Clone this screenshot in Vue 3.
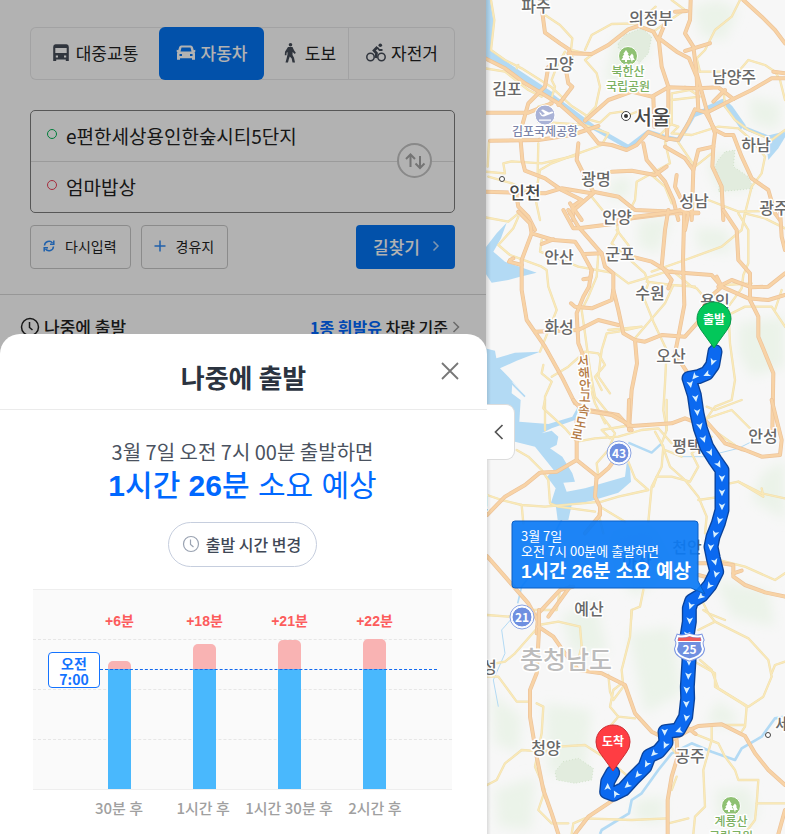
<script setup>
import { ref } from 'vue'

const modes = [
  { id: 'bus', label: '대중교통' },
  { id: 'car', label: '자동차' },
  { id: 'walk', label: '도보' },
  { id: 'bike', label: '자전거' },
]
const mode = ref('car')
const start = ref('e편한세상용인한숲시티5단지')
const goal = ref('엄마밥상')

const bars = [
  { extra: 6, label: '30분 후', height: 8 },
  { extra: 18, label: '1시간 후', height: 25 },
  { extra: 21, label: '1시간 30분 후', height: 29 },
  { extra: 22, label: '2시간 후', height: 30 },
]

/* Map tiles: every tile holds its own roads, shifted down by dy */
const tiles = [
  {
    dy: 0,
    minor: [
      'M18 0L28 60L18 150L60 180L110 205L200 262L260 318L310 350',
      'M172 40L225 75L262 115L258 150L320 165L300 180L335 220L345 260L332 320L300 355L345 368L375 340L410 335L430 345L470 330',
      'M300 150L320 105L380 72L460 70L490 40L512 20',
      'M560 0L600 30L540 70L505 95',
      'M765 0L740 50L690 90L660 150L635 175L645 215',
      'M645 215L760 215L790 180L840 195L870 215L885 240L900 300',
      'M240 155L215 200L200 240L210 260L195 310L160 320',
      'M0 205L60 215L130 270L170 290',
      'M640 265L560 280L560 370L520 410',
      'M600 260L645 290L560 300',
      'M716 275L720 320L750 360L790 390L860 420L900 390',
      'M550 370L580 380L560 400L620 405L700 380L760 385L800 420L840 470L830 520L800 560L775 660',
      'M160 365L300 375L370 400L350 435L280 460L200 490L165 510L150 590L165 660',
      'M0 515L60 520L55 490L80 484L170 490L280 465',
      'M160 430L158 520',
      'M12 425L8 500',
      'M540 425L555 490L455 545L450 600L430 640',
      'M575 420L630 500L680 460',
      'M500 525L540 560L560 610',
      'M320 590L360 640L420 650',
      'M670 600L760 635L900 632',
      'M95 205L100 195',
      'M10 530L80 550L160 590',
    ],
    major: [
      'M172 38L180 98L225 130L252 148L262 180L240 195L250 250L262 260L220 315',
      'M250 160L320 162L370 135L430 88L460 78L505 95L522 125L530 200L550 260L550 330L545 420',
      'M540 70L522 115L575 155L612 175L635 230L640 330',
      'M617 0L615 60L600 100L625 140L635 220L665 330L690 400L685 440L640 450L625 510',
      'M600 153L675 130',
      'M605 33L570 35',
      'M775 0L830 50L870 90L900 130',
      'M900 235L860 235L800 270L745 297L665 338L630 328L610 370L580 420L540 415L490 396L455 435L425 450L380 435L340 430L300 380L220 310L120 250L60 205L0 175',
      'M190 200L180 260L130 310L105 400L112 480L120 512L180 535L230 570L290 600L262 620L265 660',
      'M0 338L130 338L200 310',
      'M15 422L160 420L260 405L340 378',
      'M300 362L370 300L440 275L500 290L550 262L640 265L700 262L745 297',
      'M505 290L508 380',
      'M685 305L720 270',
      'M865 215L900 220',
      'M280 430L275 480L300 530L325 575L400 590L450 630L570 635L640 638',
      'M475 430L485 480L540 545L565 600L580 660',
      'M540 440L600 475L625 510L620 660',
      'M575 525L570 560L590 600',
      'M685 440L682 500L710 560L715 660',
      'M660 335L690 390L720 405L745 405L770 470L800 535L850 570L870 640L885 660',
      'M0 575L90 578L180 580L230 565L320 580',
      'M92 575L100 620L130 650L150 690',
      'M380 515L440 512L510 525L545 500',
      'M255 640L325 580',
      'M255 610L290 660',
      'M400 660L560 640L640 640',
    ],
  },
  {
    dy: 630,
    minor: [
      'M0 22L70 35L100 10',
      'M100 20L85 55L40 105L75 135L170 170L185 180L190 230L215 300L195 350L165 425',
      'M170 90L165 125L230 150L280 170L390 190L430 220L480 205L560 180L620 230L635 235L660 265',
      'M340 130L335 200L310 260L290 300L300 370L315 480L330 560L370 610',
      'M395 40L400 65L380 100L430 145L480 190L490 220L475 260L505 335L545 420L540 520L535 600L545 660',
      'M395 60L430 105L440 140',
      'M565 225L540 280L505 320L450 385',
      'M485 215L560 225L630 230',
      'M780 10L770 60L710 110L600 150L500 185',
      'M760 10L790 60L790 160L775 195L770 235L730 290L735 400L750 510L740 570L690 590L665 625',
      'M720 225L800 220',
      'M370 360L470 350L400 365L365 370L350 420L340 500L375 550',
      'M175 465L170 490L200 515L180 560L180 660',
      'M200 500L250 470L300 425L340 430L360 465L330 500L350 540',
      'M740 310L780 290L860 290L900 350',
      'M780 10L840 25L900 55',
      'M650 630L740 600L800 660',
      'M290 440L330 580L360 640',
      'M870 300L890 240',
    ],
    major: [
      'M100 5L135 40L140 70L205 90L270 95L290 125L320 180L312 230L295 260L275 310L280 400L300 450',
      'M250 0L280 50L350 130L360 170L385 190L385 240L380 270L320 295L270 290L258 280',
      'M385 240L400 300L415 370L450 390L480 395L530 375L600 380L640 335',
      'M350 130L300 132',
      'M320 180L316 205L295 208',
      'M170 102L205 88',
      'M235 0L265 55L280 55L400 40L450 20L550 8L590 0',
      'M550 0L540 60L530 170L560 210L550 235',
      'M440 140L500 155L550 185L680 195L710 230L790 265L850 270L900 255',
      'M598 0L594 150L598 285L580 380L570 430L605 485',
      'M585 0L610 10L600 60',
      'M715 0L755 60L760 150L795 190L795 270L820 320L820 380L865 490L862 660',
      'M140 70L110 150L110 240L125 330L180 410L230 500L270 580L310 600L400 615L440 660',
      'M150 365L280 360L340 330L400 345',
      'M450 390L456 460L440 540L432 660',
      'M695 200L710 230L660 275',
      'M700 230L740 210L800 232L850 230L900 190',
      'M72 155L110 165',
      'M75 150L85 145',
      'M885 0L890 80L900 120',
    ],
  },
  {
    dy: 1200,
    minor: [
      'M180 0L175 25L240 85L275 125L330 115L400 110L470 90L520 85L560 130',
      'M345 40L390 100L370 150L335 190L340 230',
      'M440 75L350 90L375 115',
      'M545 0L545 90L530 130L555 200L600 240L640 290L665 350L660 400',
      'M510 95L535 140L530 200L500 260L490 365',
      'M505 260L515 230L560 230L615 245L640 200L620 160L680 110',
      'M540 150L590 170',
      'M420 160L450 235L490 270L400 290L350 305L180 320L110 315L50 300L6 285',
      'M110 315L115 370',
      'M95 150L130 170L170 210L190 240L195 310L220 320L330 335',
      'M345 320L420 365',
      'M640 300L710 290',
      'M735 250L760 245L835 290L830 265',
      'M760 245L830 280L900 295',
      'M665 20L690 30L770 0',
      'M700 100L770 150',
      'M700 480L780 500L870 540L900 520',
      'M340 340L355 400',
      'M475 570L465 620L440 630L438 660',
      'M655 610L670 640L720 660',
      'M6 645L70 650L120 630L215 630L225 570',
    ],
    major: [
      'M265 0L290 30L380 45L440 78L560 70L600 55L640 70',
      'M660 60L700 105L720 130L780 150L830 170L885 165L890 120L860 0',
      'M432 0L430 78',
      'M275 60L275 180L215 215L165 218L120 255L60 290L6 345',
      'M275 180L335 228L330 290L345 320L345 345L300 400',
      'M400 165L370 205L335 235',
      'M265 560L225 570L160 640L155 700',
      'M6 468L60 530L130 610L160 665',
      'M640 490L710 490L745 495L745 530L780 555L840 577L900 590',
      'M745 520L770 512',
      'M640 525L680 535',
      'M255 560L190 650',
    ],
  },
  {
    dy: 1830,
    minor: [
      'M165 45L90 130L60 155L6 165',
      'M160 45L220 35L285 50L290 110L275 165',
      'M440 0L435 80L410 180L415 230L385 270L375 245L370 195',
      'M410 220L385 240L375 290L400 320L450 325',
      'M400 320L370 355L370 400',
      'M6 200L40 200L95 275L135 275',
      'M220 410L300 405L370 450L430 500',
      'M6 525L35 510L60 460L110 420L180 425L220 410',
      'M640 60L690 35L670 10L655 0',
      'M690 35L790 85L850 150L860 200L835 260L790 290L700 235L680 180L645 150',
      'M620 150L690 190L690 230L770 280L785 290L780 350L770 365',
      'M900 155L870 165L860 190',
      'M680 350L680 390L655 480L660 590L630 620L625 672',
      'M625 370L700 400L720 440L750 480L760 510L820 510L815 580L900 580',
      'M575 500L560 540',
      'M780 670L810 630L815 580',
      'M548 625L440 630L300 625L265 640L260 672',
      'M550 640L610 625',
      'M155 280L175 290L170 370L150 470L180 540L160 600L200 640L250 640',
      'M580 440L550 400',
      'M780 345L700 345',
    ],
    major: [
      'M162 0L162 60L155 190L135 240L135 320L155 440L175 540L200 610L220 672',
      'M160 50L205 80L240 130L280 180L350 190L420 225L450 310L500 365L540 385',
      'M560 390L610 362L640 348L710 343L780 378L810 430L850 480L900 525',
      'M575 390L578 440L560 500L548 570L548 672',
      'M270 672L310 620L400 560',
      'M610 355L632 372',
      'M900 600L880 672',
    ],
  },
]

const route =
  'M690 1055L683 1095L665 1120L640 1130L612 1135L628 1185L636 1240L646 1285L665 1340L690 1380L711 1410V1530L700 1570L684 1610L678 1640L685 1675L695 1715L675 1755L650 1785L620 1803L613 1825V1865L606 1910L612 1980L607 2060L608 2095L602 2150L580 2190L540 2195L543 2228L520 2255L492 2268L480 2300L445 2335L415 2368L385 2383L365 2375L368 2345L383 2318'

const arrows = [
  [683, 1086, 20], [665, 1123, 65], [629, 1130, 40], [616, 1153, -10], [632, 1195, -8], [637, 1237, -4],
  [645, 1279, -12], [656, 1318, -18], [676, 1358, -28], [701, 1394, -30], [711, 1435, 0], [711, 1478, 0],
  [711, 1520, 0], [703, 1562, 15], [690, 1603, 18], [677, 1642, 5], [690, 1686, -15], [693, 1723, 15],
  [673, 1758, 35], [647, 1790, 50], [617, 1818, 20], [614, 1862, 2], [606, 1905, 5], [612, 1986, 0],
  [610, 2028, 2], [605, 2070, 2], [604, 2112, 0], [604, 2154, 10], [581, 2192, 70], [539, 2196, 0],
  [541, 2236, 25], [506, 2261, 45], [485, 2293, 30], [458, 2325, 40], [427, 2357, 50], [392, 2381, 150],
  [368, 2360, 180],
]

/* x and y are the centre of the label */
const labels = [
  ['파주', 50, 6], ['의정부', 165, 18], ['고양', 73, 64], ['김포', 21, 89], ['남양주', 248, 77],
  ['하남', 270, 145], ['광명', 110, 179], ['성남', 208, 201], ['광주', 288, 208], ['안양', 131, 217],
  ['안산', 73, 257], ['군포', 134, 254], ['수원', 164, 293], ['용인', 229, 301], ['화성', 73, 327],
  ['오산', 185, 356], ['평택', 201, 446], ['안성', 277, 436], ['천안', 201, 547], ['아산', 151, 562],
  ['예산', 103, 609], ['홍성', -4, 667], ['당진', -12, 503], ['청양', 60, 748], ['공주', 204, 756], ['세종', 304, 724],
]
const highway = [
  ['서', 97, 361, -5], ['해', 98, 373, -5], ['안', 99, 385, -3], ['고', 99, 397, 2],
  ['속', 98, 410, 6], ['도', 95, 422, 10], ['로', 91, 434, 10],
]
const parks = [
  { x: 142, y: 56, first: '북한산' },
  { x: 245, y: 806, first: '계룡산' },
]
</script>

<template>
  <div class="page">
    <section class="panel">
      <div class="search">
        <nav class="modes" aria-label="이동 수단">
          <button
            v-for="m in modes"
            :key="m.id"
            type="button"
            class="mode"
            :class="[m.id, { active: mode === m.id }]"
            @click="mode = m.id"
          >
            <svg v-if="m.id === 'bus'" class="mode-icon" viewBox="0 0 20 20" aria-hidden="true">
              <path fill-rule="evenodd" d="M4.500 1.200h11q2.300.3 2.300 2.800v14h-3v-1.500h-9.600v1.500h-3v-14q0-2.500 2.300-2.800zM4.300 5v5h11.400v-5zM4.800 12.500v2h2.200v-2zM13 12.500v2h2.200v-2z" />
            </svg>
            <svg v-else-if="m.id === 'car'" class="mode-icon" viewBox="0 0 20 20" aria-hidden="true">
              <path fill-rule="evenodd" d="M5.200 2.500h9.600q1.500 0 2 1.500l1 3.300 1.500-.5v2l-.7.5q.4.700.4 1.500v6h-3v-1.500h-12v1.500h-3v-6q0-.8.400-1.500l-.7-.5v-2l1.500.5 1-3.300q.5-1.500 2-1.500zM5.500 4.500l-1 4h11l-1-4zM3.500 11v2h2.500v-2zM14 11v2h2.500v-2z" />
            </svg>
            <svg v-else-if="m.id === 'walk'" class="mode-icon" viewBox="0 0 20 20" aria-hidden="true">
              <circle cx="10.500" cy="1.800" r="1.800" />
              <path d="M8 4h4.500l1.500 3.200 1.800 2.600-1 1.200-2.200-2-.1 3 1.500 2.800 1 4.700h-2.500l-.8-4-1.900-2-1 2.700-.8 3.300h-2.500l1.200-4.500.8-3.500v-2.500l-.9.800-.1 2.500h-1.700l.2-3.500z" />
            </svg>
            <svg v-else class="mode-icon" viewBox="0 0 20 20" aria-hidden="true">
              <g fill="none" stroke="currentColor">
                <circle cx="4.500" cy="14" r="3.700" stroke-width="1.500" />
                <circle cx="15.500" cy="14" r="3.700" stroke-width="1.500" />
                <path d="M11.500 4L8 7.500L10.500 10.300L9.800 15" stroke-width="2.700" />
                <path d="M11.200 4.500L13.500 7H16.500" stroke-width="1.800" />
              </g>
              <circle cx="14.300" cy="2.200" r="1.800" />
            </svg>
            <span>{{ m.label }}</span>
          </button>
        </nav>

        <form class="places" @submit.prevent>
          <label class="place from">
            <span class="dot"></span>
            <input v-model="start" type="text" aria-label="출발지" />
          </label>
          <label class="place to">
            <span class="dot"></span>
            <input v-model="goal" type="text" aria-label="도착지" />
          </label>
          <button class="swap" type="button" aria-label="출발지와 도착지 바꾸기" @click="[start, goal] = [goal, start]">
            <svg width="22" height="18" viewBox="0 0 22 18" fill="none" stroke="currentColor" stroke-width="2" aria-hidden="true">
              <path d="M6.500 15V2.500M2 7L6.500 2.500L11 7M16 4v12M11.500 11.500L16 16L20.500 11.500" />
            </svg>
          </button>
        </form>

        <div class="actions">
          <button type="button" class="plain">
            <svg width="12" height="12" viewBox="0 0 12 12" fill="none" stroke="currentColor" stroke-width="1.500" aria-hidden="true">
              <path d="M1.500 5.500A4.500 4.500 0 0 1 9.500 3M10.500 6.500A4.500 4.500 0 0 1 2.500 9" />
              <path d="M10.800 .5V4.300H7M1.200 11.500V7.700H5" />
            </svg>
            <span>다시입력</span>
          </button>
          <button type="button" class="plain">
            <svg width="12" height="12" viewBox="0 0 12 12" fill="none" stroke="currentColor" stroke-width="1.500" aria-hidden="true">
              <path d="M6 0.500V11.500M.5 6H11.500" />
            </svg>
            <span>경유지</span>
          </button>
          <button type="button" class="find">
            <span>길찾기</span>
            <svg width="8" height="12" viewBox="0 0 8 12" fill="none" stroke="currentColor" stroke-width="1.500" aria-hidden="true">
              <path d="M1.500 1.500L6 6L1.500 10.500" />
            </svg>
          </button>
        </div>
      </div>

      <div class="options">
        <button type="button" class="option">
          <svg width="20" height="20" viewBox="0 0 20 20" fill="none" stroke="currentColor" stroke-width="1.500" aria-hidden="true">
            <circle cx="10" cy="10" r="8.500" />
            <path d="M9.500 5V10.500L12.500 13" />
          </svg>
          <span>나중에 출발</span>
        </button>
        <button type="button" class="option car-type">
          <span><b>1종 휘발유</b> 차량 기준</span>
          <svg width="8" height="12" viewBox="0 0 8 12" fill="none" stroke="currentColor" stroke-width="1.500" aria-hidden="true">
            <path d="M1.500 1L6.500 6L1.500 11" />
          </svg>
        </button>
      </div>

      <div class="dim"></div>

      <div class="sheet" role="dialog" aria-labelledby="sheet-title">
        <header class="sheet-head">
          <h2 id="sheet-title">나중에 출발</h2>
          <button type="button" class="close" aria-label="닫기">
            <svg width="18" height="18" viewBox="0 0 18 18" fill="none" stroke="currentColor" stroke-width="1.800" aria-hidden="true">
              <path d="M1 1L17 17M17 1L1 17" />
            </svg>
          </button>
        </header>
        <div class="sheet-body">
          <p class="when">3월 7일 오전 7시 00분 출발하면</p>
          <p class="total"><strong>1<i>시간</i> 26<i>분</i></strong> 소요 예상</p>
          <button type="button" class="change">
            <svg width="18" height="18" viewBox="0 0 18 18" fill="none" stroke="currentColor" stroke-width="1.200" aria-hidden="true">
              <circle cx="9" cy="9" r="7.500" />
              <path d="M8.500 4.500V9.500L11.500 12" />
            </svg>
            <span>출발 시간 변경</span>
          </button>

          <figure class="chart">
            <div class="plot">
              <div class="grid"><span></span><span></span><span></span><span></span></div>
              <div v-for="b in bars" :key="b.label" class="col">
                <span class="extra">+{{ b.extra }}분</span>
                <span class="over" :style="{ height: b.height + 'px' }"></span>
                <span class="base"></span>
              </div>
              <div class="baseline"><span class="badge">오전<br />7:00</span></div>
            </div>
            <div class="axis">
              <span v-for="b in bars" :key="b.label">{{ b.label }}</span>
            </div>
          </figure>
        </div>
      </div>
    </section>

    <section class="map">
      <svg class="map-art" viewBox="0 0 299 834" preserveAspectRatio="xMinYMin slice" role="img" aria-label="경로 지도">
        <defs>
          <filter id="soft" x="-20%" y="-20%" width="140%" height="140%"><feGaussianBlur stdDeviation="18" /></filter>
          <linearGradient id="edge"><stop offset="0" stop-color="#000" stop-opacity=".14" /><stop offset="1" stop-color="#000" stop-opacity="0" /></linearGradient>
        </defs>
        <rect width="299" height="834" fill="#f7f7f7" />
        <g transform="translate(-1 0) scale(.333333)">
          <g class="hills" filter="url(#soft)">
            <path d="M390 110L450 80L500 100L490 170L440 200L400 250L360 240Z" />
            <path d="M620 20L700 0L760 30L720 120L650 110Z" />
            <path d="M700 450L750 470L800 570L700 575L670 500Z" />
            <path d="M790 290L890 310L880 390L800 370Z" />
            <path d="M380 540L440 530L430 590L370 600Z" />
            <path d="M460 660L560 650L520 760L460 740Z" />
            <path d="M630 680L730 690L740 760L640 750Z" />
            <path d="M760 970L900 950L900 1100L800 1130L760 1060Z" />
            <path d="M830 1420L900 1380L900 1560L800 1500Z" />
            <path d="M380 1600L500 1580L560 1700L450 1790L400 1720Z" />
            <path d="M690 1740L850 1770L870 1880L740 1850Z" />
            <path d="M230 1850L330 1800L370 1960L260 1960Z" />
            <path d="M430 1900L560 1880L590 2080L480 2140Z" />
            <path d="M180 2110L320 2130L300 2330L190 2320Z" />
            <path d="M20 2080L110 2150L100 2260L30 2230Z" />
            <path d="M700 2100L760 2150L740 2180L660 2170Z" />
            <path d="M30 2370L150 2330L140 2490L40 2480Z" />
            <path d="M690 2370L790 2360L820 2440L770 2500L700 2460Z" />
            <path d="M450 2400L540 2390L530 2470L450 2460Z" />
          </g>
          <g class="park">
            <path d="M400 130L420 105L470 85L500 110L490 160L462 190L450 170L400 145Z" />
            <path d="M700 480L720 455L750 450L745 500L790 530L805 565L760 570L700 575L705 540L690 500Z" />
            <path d="M235 2285L280 2275L325 2305L320 2340L270 2350L215 2340L210 2315Z" />
          </g>
          <g class="water">
            <path d="M0 0H15L25 60L18 155L60 180L0 178Z" />
            <path d="M0 745L35 700L65 668L48 715L25 755L60 785L155 818L105 830L70 840L20 848L0 818Z" />
            <path d="M0 1045L30 1052L34 1075L90 1058L165 1055L95 1082L45 1105L70 1130L110 1175L82 1145L80 1180L107 1200L103 1265L190 1272L262 1250L290 1200L270 1260L200 1285L170 1300L200 1292L220 1310L215 1335L195 1345L232 1370L262 1420L270 1445L235 1448L245 1475L300 1465L420 1430L425 1390H434L438 1445L400 1478L320 1502L260 1515L250 1560H218L213 1522L198 1508L212 1465L186 1430L206 1410L150 1340L90 1325L0 1220Z" />
            <path d="M850 480L845 445L860 415L900 400V412L880 445Z" />
          </g>
          <g class="river">
            <path d="M10 162L100 222L200 288" stroke-width="22" />
            <path d="M200 288L330 385L375 410L430 442L490 396L535 410L580 420L605 380L625 345L665 330" stroke-width="14" />
            <path d="M665 328L715 306L735 325L775 382" stroke-width="19" />
            <path d="M775 382L850 412L900 400" stroke-width="11" />
            <path d="M40 1105L90 1160L120 1190" stroke-width="5" />
            <path d="M430 1328L470 1345L500 1358L530 1330" stroke-width="7" />
            <path d="M590 1370L660 1370L760 1345L820 1315" stroke-width="3" />
            <path d="M230 1560L155 1700L110 1760L98 1810" stroke-width="5" />
            <path d="M85 1850L50 1890L60 1960L25 2040L40 2120" stroke-width="3" />
            <path d="M900 2150L870 2155L830 2210L770 2245L750 2280L680 2255L620 2230L560 2260L520 2310L470 2380L440 2400L432 2440L350 2490L345 2502" stroke-width="8" />
          </g>
          <g class="roads">
            <template v-for="t in tiles" :key="t.dy">
              <g :transform="`translate(0 ${t.dy})`">
                <path v-for="d in t.minor" :key="d" class="minor-case" :d="d" />
                <path v-for="d in t.minor" :key="d" class="minor" :d="d" />
              </g>
            </template>
            <template v-for="t in tiles" :key="t.dy">
              <g :transform="`translate(0 ${t.dy})`">
                <path v-for="d in t.major" :key="d" class="major-case" :d="d" />
                <path v-for="d in t.major" :key="d" class="major" :d="d" />
              </g>
            </template>
          </g>
        </g>

        <g class="names">
          <text v-for="[name, x, y] in labels" :key="name" :x="x" :y="y + 6">{{ name }}</text>
          <text class="capital" x="166" y="125">서울</text>
          <text class="metro" x="39" y="199">인천</text>
          <text class="province" x="80" y="669">충청남도</text>
          <text class="airport" x="59" y="136">김포국제공항</text>
          <text
            v-for="[c, x, y, r] in highway"
            :key="c"
            class="highway"
            :x="x"
            :y="y + 5"
            :transform="`rotate(${r} ${x} ${y})`"
          >{{ c }}</text>
        </g>
        <g fill="#fff" stroke="#444">
          <circle cx="140" cy="116" r="4.500" />
          <circle cx="16" cy="179" r="2.500" />
          <circle cx="282" cy="735" r="2.500" />
        </g>
        <circle cx="140" cy="116" r="2" fill="#333" />

        <g transform="translate(59 115)">
          <circle r="10" fill="#a9b2d6" stroke="#fff" />
          <path d="M-6 -3l2 1 1 2 3-1-4-4 2-.5 6 3 3-1q2 0 1 1.500l-9 3.500q-2 0-3-1zM-6 4.500h12v1.200h-12z" fill="#fff" />
        </g>
        <g v-for="p in parks" :key="p.first" :transform="`translate(${p.x} ${p.y})`">
          <circle r="9.500" fill="#8fc173" stroke="#fff" />
          <path d="M-2 -6l2.700 4h-1l2 3h-1l2 3h-3.700v2h-2v-2h-3.700l2-3h-1l2-3h-1zM4 -2.500l2 3h-1l1.800 3.500h-2.300v1.500h-1.200v-1.500h-.3l-1.500-3.500z" fill="#fff" />
          <text class="park-name" y="20">{{ p.first }}</text>
          <text class="park-name" y="35">국립공원</text>
        </g>
        <g class="shield">
          <circle class="ring" cx="133" cy="453" r="12" />
          <circle cx="133" cy="453" r="10" />
          <text x="133" y="458">43</text>
          <circle class="ring" cx="36" cy="617" r="12" />
          <circle cx="36" cy="617" r="10" />
          <text x="36" y="622">21</text>
        </g>

        <g transform="translate(-1 0) scale(.333333)">
          <path class="route-edge" :d="route" />
          <path class="route-fill" :d="route" />
          <path
            v-for="[x, y, r] in arrows"
            :key="x + '-' + y"
            class="arrow"
            :transform="`translate(${x} ${y}) rotate(${r})`"
            d="M0 11L-10 -10L0 -5L10 -10Z"
          />
        </g>

        <g class="shield">
          <path d="M192 636q5 1.500 11.500 -1q6.500 2.500 11.500 1l1.500 4q-2 3 .5 9q-.5 7 -13.500 10.500q-13 -3.500 -13.500 -10.500q2.500 -6 .5 -9z" fill="#6f8fe0" stroke="#7d98e2" stroke-width="4" />
          <path d="M192 636q5 1.500 11.500 -1q6.500 2.500 11.500 1l1.500 4q-2 3 .5 9q-.5 7 -13.500 10.500q-13 -3.500 -13.500 -10.500q2.500 -6 .5 -9z" fill="#6f8fe0" stroke="#fff" stroke-width="2" />
          <path d="M192.500 637.500q6 1 11 -1q5 2 11 1l.5 3.500h-23z" fill="#ee5b5b" />
          <path d="M191 641.500h25" stroke="#fff" />
          <text x="203.500" y="654">25</text>
        </g>

        <path d="M29 521H209Q212 521 212 524V581L219 594L205 588H29Q26 588 26 585V524Q26 521 29 521Z" fill="#0a7af5" fill-opacity=".92" stroke="#0c5fc4" />
        <g class="callout">
          <text x="35" y="541">3월 7일</text>
          <text x="35" y="556">오전 7시 00분에 출발하면</text>
          <text class="callout-total" x="35" y="578">1시간 26분 소요 예상</text>
        </g>

        <g class="pin">
          <path d="M228 348L215 330Q211 325 211 319A17 17 0 0 1 245 319Q245 325 241 330Z" fill="#03c75a" stroke="#079748" />
          <text x="228" y="324">출발</text>
          <path d="M127 771L114 753Q110 748 110 742A17 17 0 0 1 144 742Q144 748 140 753Z" fill="#ff3d43" stroke="#cc2e34" />
          <text x="127" y="746">도착</text>
        </g>
        <rect width="5" height="834" fill="url(#edge)" />
      </svg>
      <button type="button" class="fold" aria-label="패널 접기">
        <svg width="10" height="16" viewBox="0 0 10 16" fill="none" stroke="currentColor" stroke-width="1.700" aria-hidden="true">
          <path d="M8.500 1L1.500 8L8.500 15" />
        </svg>
      </button>
    </section>
  </div>
</template>

<style>
body {
  margin: 0;
}
</style>

<style scoped>
.page {
  display: grid;
  grid-template-columns: minmax(0, 486px) minmax(0, 1fr);
  min-height: 100vh;
  font-family: 'Noto Sans CJK KR', 'Noto Sans', sans-serif;
  color: #222;
}
button,
input {
  font: inherit;
  color: inherit;
}
button {
  margin: 0;
  padding: 0;
  border: 0;
  background: none;
  cursor: pointer;
}
i {
  font-style: normal;
}
.panel {
  position: relative;
  z-index: 1;
  background: #fff;
}
.search {
  padding: 27px 31px 25px 30px;
  border-bottom: 1px solid #d8d8d8;
}
.modes {
  display: grid;
  grid-template-columns: 129fr 105fr 84fr 107fr;
  height: 53px;
  border-radius: 6px;
  box-shadow: inset 0 0 0 1px #e9e9ea;
}
.mode {
  display: flex;
  align-items: center;
  justify-content: center;
  gap: 5px;
  padding-bottom: 2px;
  font-size: 17px;
  line-height: 24px;
}
.mode.walk {
  padding-left: 4px;
}
.mode.bike {
  border-left: 1px solid #e9e9ea;
}
.mode.active {
  border-radius: 6px;
  background: #0475f4;
  color: #fff;
  font-weight: 500;
}
.mode-icon {
  width: 20px;
  height: 20px;
  fill: currentColor;
  color: #454c58;
}
.active .mode-icon {
  color: #fff;
}
.places {
  position: relative;
  margin: 30px 0 0;
  border: 1px solid #7d7d7d;
  border-radius: 5px;
}
.place {
  display: flex;
  align-items: center;
  gap: 9px;
  height: 50px;
  padding: 0 64px 0 16px;
}
.place + .place {
  border-top: 1px solid #dedede;
}
.dot {
  box-sizing: border-box;
  flex: none;
  width: 10px;
  height: 10px;
  margin-bottom: 4px;
  border: 1px solid #00b454;
  border-radius: 50%;
}
.to .dot {
  border-color: #ee4058;
}
.place input {
  flex: 1;
  min-width: 0;
  height: 30px;
  padding: 0;
  border: 0;
  outline: 0;
  background: none;
  font-size: 19px;
  line-height: 30px;
}
.swap {
  position: absolute;
  top: 32px;
  right: 22px;
  box-sizing: border-box;
  display: grid;
  place-items: center;
  width: 35px;
  height: 35px;
  border: 2px solid #c4c4c4;
  border-radius: 50%;
  background: #fff;
  color: #a6a6a6;
}
.actions {
  display: flex;
  gap: 10px;
  margin-top: 12px;
}
.plain,
.find {
  box-sizing: border-box;
  display: flex;
  align-items: center;
  height: 44px;
  padding-bottom: 2px;
  border-radius: 4px;
}
.plain {
  gap: 10px;
  padding-right: 13px;
  padding-left: 12px;
  border: 1px solid #c8c8c8;
  font-size: 14px;
}
.plain svg {
  color: #2f8bf5;
}
.find {
  gap: 12px;
  margin-left: auto;
  padding-right: 15px;
  padding-left: 17px;
  background: #0475f4;
  color: #fff;
  font-size: 17px;
  font-weight: 500;
}
.find svg {
  opacity: 0.7;
}
.options {
  display: flex;
  justify-content: space-between;
  padding: 20px 26px 0 20px;
}
.option {
  display: flex;
  align-items: center;
  gap: 4px;
  font-size: 17px;
  font-weight: 500;
  line-height: 24px;
}
.car-type {
  font-size: 16px;
}
.car-type b {
  color: #0068ff;
  font-weight: 700;
}
.car-type svg {
  color: #999;
}
.dim {
  position: absolute;
  inset: 0;
  background: rgba(0, 0, 0, 0.3);
}
.sheet {
  position: absolute;
  right: -1px;
  bottom: 0;
  left: 0;
  border-radius: 20px 20px 0 0;
  background: #fff;
}
.sheet-head {
  position: relative;
  border-bottom: 1px solid #ebebeb;
}
.sheet-head h2 {
  margin: 0;
  padding: 25px 0 14px;
  color: #2b3340;
  font-size: 26px;
  font-weight: 700;
  line-height: 36px;
  text-align: center;
}
.close {
  position: absolute;
  top: 22px;
  right: 22px;
  display: grid;
  place-items: center;
  width: 30px;
  height: 30px;
  color: #777;
}
.sheet-body {
  display: flex;
  flex-direction: column;
  align-items: center;
  padding: 28px 35px 16px 33px;
}
.when,
.total {
  margin: 0;
}
.when {
  color: #4a5260;
  font-size: 20px;
  line-height: 28px;
}
.total {
  color: #0068ff;
  font-family: 'Liberation Sans', 'Noto Sans CJK KR', sans-serif;
  font-size: 30px;
  line-height: 40px;
}
.total i {
  font-weight: 500;
}
.change {
  box-sizing: border-box;
  display: flex;
  align-items: center;
  gap: 6px;
  height: 45px;
  margin: 16px 0 22px;
  padding: 0 15px 2px 13px;
  border: 1px solid #c6cede;
  border-radius: 23px;
  color: #3f4856;
  font-size: 16px;
  font-weight: 500;
}
.change svg {
  color: #9aa3b2;
}
.chart {
  align-self: stretch;
  margin: 0;
}
.plot {
  position: relative;
  display: grid;
  grid-template-columns: repeat(4, 1fr);
  height: 199px;
  padding: 0 35px 0 44px;
  border-top: 1px solid #eee;
  border-bottom: 1px solid #eee;
  background: #fafafa;
}
.grid {
  position: absolute;
  inset: 0;
  display: grid;
  grid-template-rows: 49px 50px 50px 50px;
}
.grid span + span {
  border-top: 1px dashed #e6e6e6;
}
.col {
  position: relative;
  display: flex;
  flex-direction: column;
  align-items: center;
  justify-content: flex-end;
}
.extra {
  position: absolute;
  top: 21px;
  color: #fc5c5c;
  font-family: 'Liberation Sans', 'Noto Sans CJK KR', sans-serif;
  font-size: 14px;
  font-weight: 700;
  line-height: 20px;
}
.over {
  width: 23px;
  border-radius: 5px 5px 0 0;
  background: #f9b3b3;
}
.base {
  width: 23px;
  height: 120px;
  background: #49b8fd;
}
.baseline {
  position: absolute;
  right: 15px;
  bottom: 119px;
  left: 15px;
  display: flex;
  align-items: center;
  height: 1px;
}
.baseline::after {
  content: '';
  flex: 1;
  border-top: 1px dashed #1269ee;
}
.badge {
  box-sizing: border-box;
  width: 52px;
  padding: 2px 0 0;
  border: 1px solid #1473ff;
  border-radius: 4px;
  background: #fff;
  color: #1473ff;
  font-size: 14px;
  font-weight: 700;
  line-height: 16px;
  text-align: center;
}
.axis {
  display: grid;
  grid-template-columns: repeat(4, 1fr);
  margin-top: 8px;
  padding: 0 35px 0 44px;
  color: #a0a0a0;
  font-size: 15px;
  font-weight: 500;
  line-height: 20px;
}
.axis span {
  justify-self: center;
  white-space: nowrap;
}
.map {
  position: relative;
  overflow: hidden;
  background: #f7f7f7;
}
.map-art {
  position: absolute;
  inset: 0;
  width: 100%;
  height: 100%;
}
.fold {
  position: absolute;
  top: 404px;
  left: 1px;
  display: grid;
  place-items: center;
  box-sizing: border-box;
  width: 28px;
  height: 56px;
  padding-right: 4px;
  border: 1px solid #dcdcdc;
  border-left: 0;
  border-radius: 0 9px 9px 0;
  background: #fff;
  color: #555;
}
.hills {
  fill: #ebf3e9;
}
.park {
  fill: #e2ecde;
  stroke: #c8dcc0;
  stroke-width: 3;
  stroke-dasharray: 2 7;
}
.water {
  fill: #b3daf4;
}
.river {
  fill: none;
  stroke: #b3daf4;
  stroke-linejoin: round;
}
.roads path {
  fill: none;
  stroke-linecap: round;
  stroke-linejoin: round;
}
.roads .minor-case {
  stroke: #efdfb0;
  stroke-width: 7;
}
.roads .minor {
  stroke: #fae9b8;
  stroke-width: 4;
}
.roads .major-case {
  stroke: #ecc39a;
  stroke-width: 12;
}
.roads .major {
  stroke: #f8d3a6;
  stroke-width: 8;
}
.names text,
.park-name {
  fill: #686868;
  stroke: #fff;
  stroke-width: 3px;
  stroke-linejoin: round;
  paint-order: stroke;
  font-size: 16px;
  font-weight: 500;
  text-anchor: middle;
}
.names .capital {
  fill: #484848;
  font-size: 20px;
}
.names .metro {
  fill: #484848;
  font-size: 17px;
}
.names .province {
  fill: #bcbcbc;
  font-size: 25px;
}
.names .airport {
  fill: #7c84a8;
  font-size: 12px;
}
.names .highway {
  fill: #b47a45;
  font-size: 13px;
}
.park-name {
  fill: #7bb060;
  font-size: 12px;
}
.shield circle {
  fill: #6f8fe0;
  stroke: #fff;
}
.shield .ring {
  stroke: #8ba3e2;
  fill: #fff;
}
.shield text {
  fill: #fff;
  font-size: 12px;
  font-weight: 700;
  text-anchor: middle;
}
.route-edge,
.route-fill {
  fill: none;
  stroke: #0b439b;
  stroke-width: 45;
  stroke-linecap: round;
  stroke-linejoin: round;
}
.route-fill {
  stroke: #0b69f0;
  stroke-width: 37;
}
.arrow {
  fill: #d8f0ff;
}
.callout text {
  fill: #fff;
  font-size: 13px;
}
.callout .callout-total {
  font-family: 'Liberation Sans', 'Noto Sans CJK KR', sans-serif;
  font-size: 19px;
  font-weight: 700;
}
.pin text {
  fill: #fff;
  font-size: 12px;
  font-weight: 700;
  text-anchor: middle;
}
</style>
